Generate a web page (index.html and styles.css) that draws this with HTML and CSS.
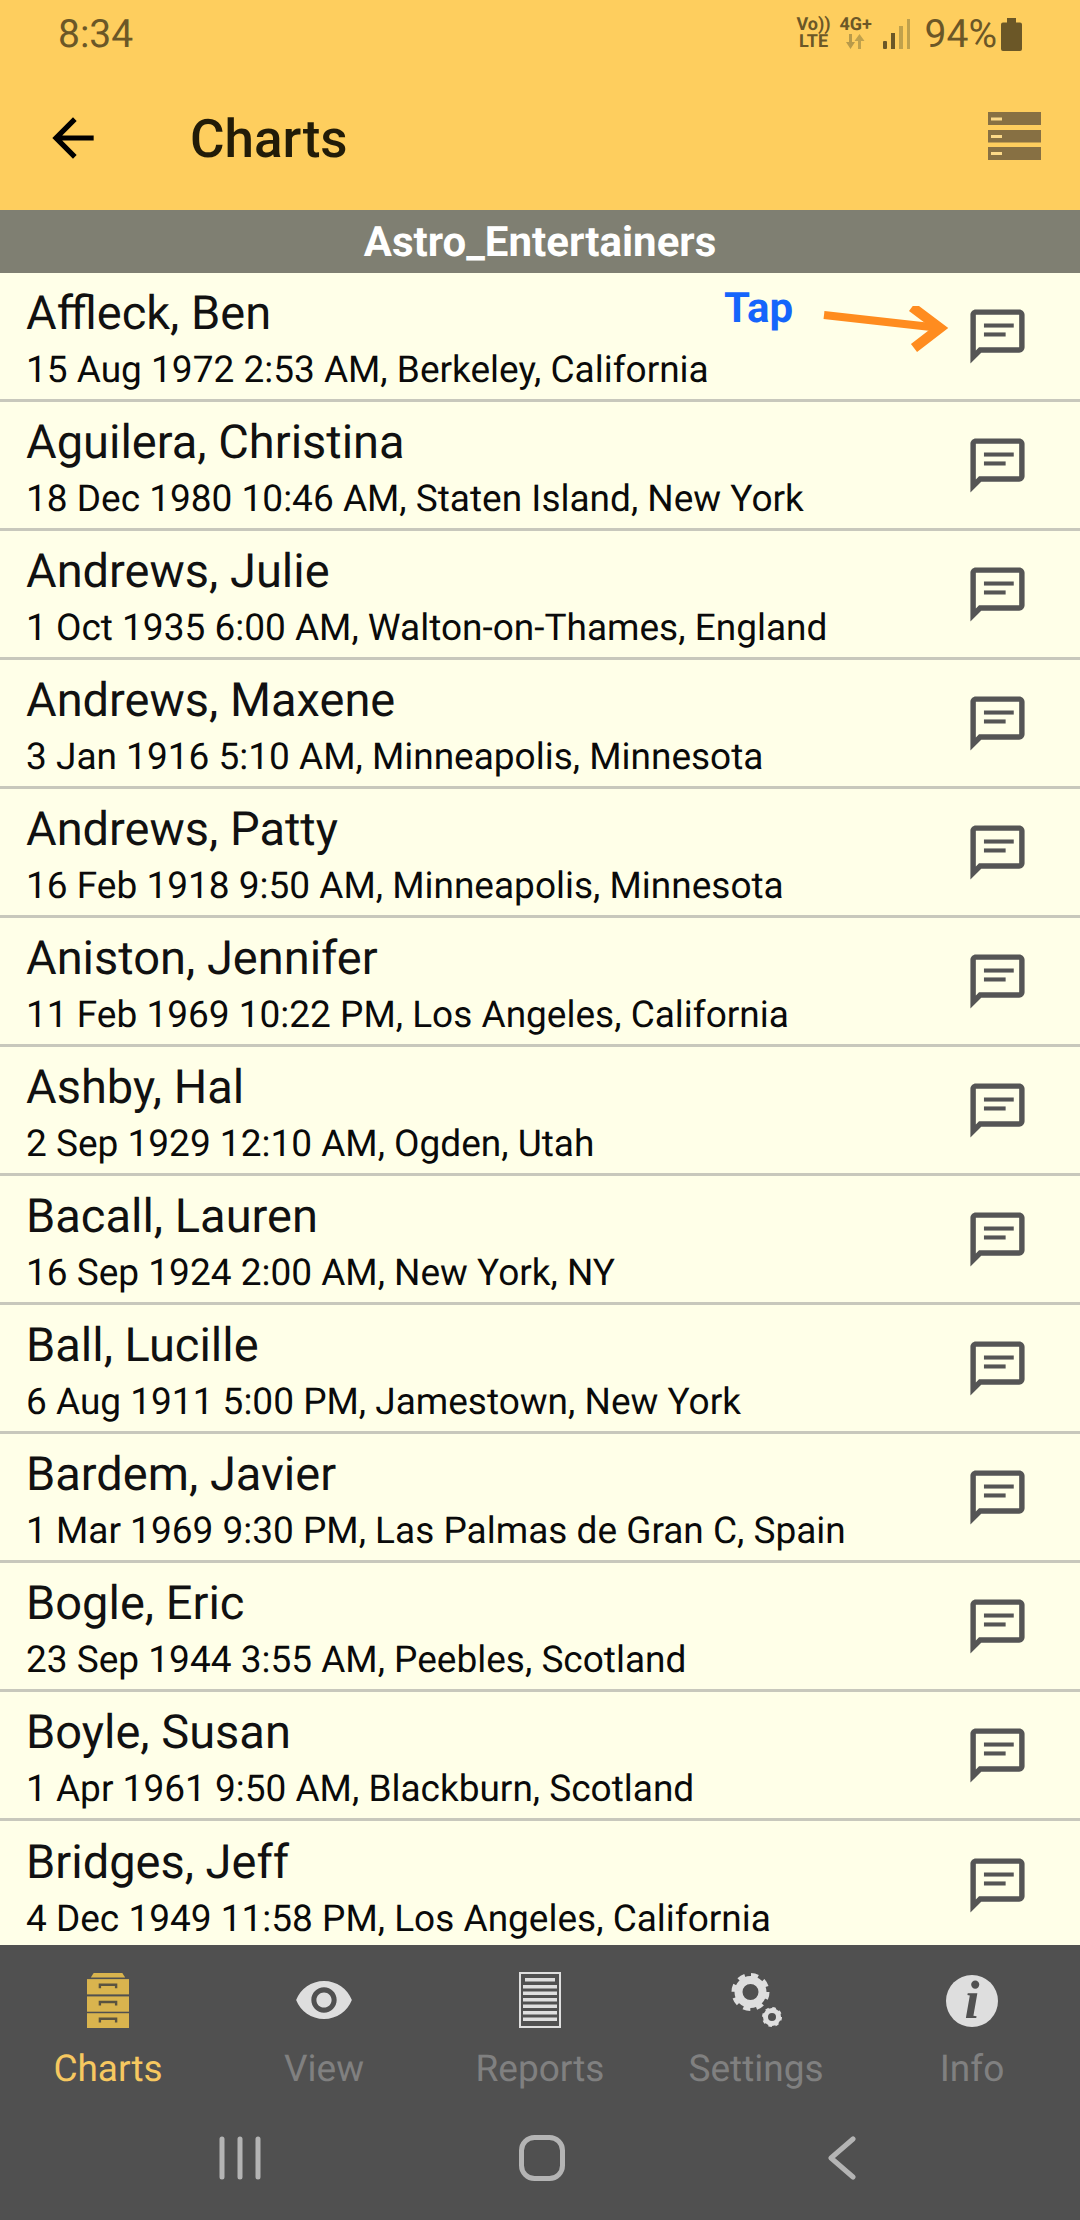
FILE: index.html
```html
<!DOCTYPE html>
<html lang="en">
<head>
<meta charset="utf-8">
<title>Charts</title>
<link rel="stylesheet" href="styles.css">
</head>
<body>
<svg class="defs" width="0" height="0" aria-hidden="true">
  <symbol id="msg" viewBox="0 0 24 24">
    <path d="M20 2H4c-1.1 0-2 .9-2 2v18l4-4h14c1.1 0 2-.9 2-2V4c0-1.1-.9-2-2-2zm0 14H5.17L4 17.17V4h16v12z"/>
    <rect x="7" y="7.2" width="11" height="1.5"/>
    <rect x="7" y="10.5" width="8" height="1.5"/>
  </symbol>
</svg>
<div class="page">
  <header class="appbar">
    <div class="status">
      <span class="clock">8:34</span>
      <div class="status-right">
        <div class="volte"><span>Vo))</span><span>LTE</span></div>
        <div class="net">
          <span>4G+</span>
          <svg width="24" height="15" viewBox="0 0 24 15"><path class="dim" d="M5 0h3v8h3l-4.5 7L2 8h3z"/><path class="dim2" d="M17 15h-3V7h-3.500l5-7 5 7H17z"/></svg>
        </div>
        <svg class="signal" width="28" height="30" viewBox="0 0 28 30">
          <rect class="on" x="0" y="22" width="4" height="8" rx="1"/>
          <rect class="on" x="8" y="14" width="4" height="16"/>
          <rect class="off" x="16" y="7" width="4" height="23"/>
          <rect class="off" x="24" y="0" width="3" height="30"/>
        </svg>
        <span class="pct">94%</span>
        <svg class="batt" width="21" height="33" viewBox="0 0 21 33"><path d="M6 0h9v4.500h4a2 2 0 0 1 2 2V31a2 2 0 0 1-2 2H2a2 2 0 0 1-2-2V6.500a2 2 0 0 1 2-2h4z"/></svg>
      </div>
    </div>
    <div class="toolbar">
      <svg class="back" width="62" height="62" viewBox="0 0 24 24"><path d="M20 11H7.830l5.590-5.590L12 4l-8 8 8 8 1.410-1.410L7.830 13H20v-2z"/></svg>
      <h1 class="title">Charts</h1>
      <svg class="menu" width="53" height="48" viewBox="0 0 53 48">
        <rect class="mbar" width="53" height="13"/><rect class="mnotch" x="3" y="5.500" width="11" height="3"/>
        <rect class="mbar" y="18" width="53" height="12.500"/><rect class="mnotch" x="3" y="23" width="11" height="3"/>
        <rect class="mbar" y="35" width="53" height="13"/><rect class="mnotch" x="3" y="40" width="11" height="3"/>
      </svg>
    </div>
  </header>
  <div class="band">Astro_Entertainers</div>
  <main class="list">
    <div class="row">
      <div class="text"><div class="name">Affleck, Ben</div><div class="sub">15 Aug 1972 2:53 AM, Berkeley, California</div></div>
      <svg class="msg"><use href="#msg"/></svg>
      <span class="tap">Tap</span>
      <svg class="arrow" width="126" height="48" viewBox="0 0 126 48"><path d="M1 9l116 13" class="shaft"/><path d="M89 1l28 21-26 20" class="ahead"/></svg>
    </div>
    <div class="row"><div class="text"><div class="name">Aguilera, Christina</div><div class="sub">18 Dec 1980 10:46 AM, Staten Island, New York</div></div><svg class="msg"><use href="#msg"/></svg></div>
    <div class="row"><div class="text"><div class="name">Andrews, Julie</div><div class="sub">1 Oct 1935 6:00 AM, Walton-on-Thames, England</div></div><svg class="msg"><use href="#msg"/></svg></div>
    <div class="row"><div class="text"><div class="name">Andrews, Maxene</div><div class="sub">3 Jan 1916 5:10 AM, Minneapolis, Minnesota</div></div><svg class="msg"><use href="#msg"/></svg></div>
    <div class="row"><div class="text"><div class="name">Andrews, Patty</div><div class="sub">16 Feb 1918 9:50 AM, Minneapolis, Minnesota</div></div><svg class="msg"><use href="#msg"/></svg></div>
    <div class="row"><div class="text"><div class="name">Aniston, Jennifer</div><div class="sub">11 Feb 1969 10:22 PM, Los Angeles, California</div></div><svg class="msg"><use href="#msg"/></svg></div>
    <div class="row"><div class="text"><div class="name">Ashby, Hal</div><div class="sub">2 Sep 1929 12:10 AM, Ogden, Utah</div></div><svg class="msg"><use href="#msg"/></svg></div>
    <div class="row"><div class="text"><div class="name">Bacall, Lauren</div><div class="sub">16 Sep 1924 2:00 AM, New York, NY</div></div><svg class="msg"><use href="#msg"/></svg></div>
    <div class="row"><div class="text"><div class="name">Ball, Lucille</div><div class="sub">6 Aug 1911 5:00 PM, Jamestown, New York</div></div><svg class="msg"><use href="#msg"/></svg></div>
    <div class="row"><div class="text"><div class="name">Bardem, Javier</div><div class="sub">1 Mar 1969 9:30 PM, Las Palmas de Gran C, Spain</div></div><svg class="msg"><use href="#msg"/></svg></div>
    <div class="row"><div class="text"><div class="name">Bogle, Eric</div><div class="sub">23 Sep 1944 3:55 AM, Peebles, Scotland</div></div><svg class="msg"><use href="#msg"/></svg></div>
    <div class="row"><div class="text"><div class="name">Boyle, Susan</div><div class="sub">1 Apr 1961 9:50 AM, Blackburn, Scotland</div></div><svg class="msg"><use href="#msg"/></svg></div>
    <div class="row"><div class="text"><div class="name">Bridges, Jeff</div><div class="sub">4 Dec 1949 11:58 PM, Los Angeles, California</div></div><svg class="msg"><use href="#msg"/></svg></div>
  </main>
  <footer class="bottom">
    <nav class="tabs">
      <div class="tab active">
        <div class="ico"><svg width="42" height="55" viewBox="0 0 44 54" preserveAspectRatio="none">
          <path class="cab" d="M4 4.500 7 0h30l3 4.500z"/>
          <rect class="cab" y="6" width="44" height="15"/><rect class="cab" y="23" width="44" height="15"/><rect class="cab" y="39.500" width="44" height="14.500"/>
          <path class="pull" d="M13.500 15v-3.500h17V15M13.500 32v-3.500h17V32M13.500 48.500V45h17v3.500"/>
        </svg></div>
        <span class="label">Charts</span>
      </div>
      <div class="tab">
        <div class="ico"><svg width="56" height="38" viewBox="1 4.500 22 15"><path class="light" d="M12 4.500C7 4.500 2.730 7.610 1 12c1.730 4.390 6 7.500 11 7.500s9.270-3.110 11-7.500c-1.730-4.390-6-7.500-11-7.500zM12 17c-2.760 0-5-2.240-5-5s2.240-5 5-5 5 2.240 5 5-2.240 5-5 5zm0-8c-1.660 0-3 1.340-3 3s1.340 3 3 3 3-1.340 3-3-1.340-3-3-3z"/></svg></div>
        <span class="label">View</span>
      </div>
      <div class="tab">
        <div class="ico"><svg width="42" height="56" viewBox="0 0 42 56">
          <rect class="page-o" x="1" y="1" width="40" height="54"/>
          <rect class="light" x="6" y="6" width="30" height="3.500"/>
          <rect class="light" x="4" y="13" width="34" height="3.500"/><rect class="light" x="4" y="19.500" width="34" height="3.500"/>
          <rect class="light" x="4" y="26" width="34" height="3.500"/><rect class="light" x="4" y="32.500" width="34" height="3.500"/>
          <rect class="light" x="4" y="39" width="34" height="3.500"/><rect class="light" x="4" y="45.500" width="34" height="3.500"/>
        </svg></div>
        <span class="label">Reports</span>
      </div>
      <div class="tab">
        <div class="ico"><svg class="gears" width="52" height="56" viewBox="0 0 52 56">
          <circle class="ring" cx="19.500" cy="20" r="12"/>
          <circle class="teeth" cx="19.500" cy="20" r="16.500"/>
          <circle class="ring2" cx="41" cy="45" r="6.500"/>
          <circle class="teeth2" cx="41" cy="45" r="8.500"/>
        </svg></div>
        <span class="label">Settings</span>
      </div>
      <div class="tab">
        <div class="ico"><svg class="info" width="54" height="70" viewBox="0 0 54 70">
          <circle class="light" cx="27" cy="35" r="26"/>
          <text class="itext" x="27" y="52" text-anchor="middle">i</text>
        </svg></div>
        <span class="label">Info</span>
      </div>
    </nav>
    <div class="sysnav">
      <svg width="42" height="44" viewBox="0 0 42 44"><path class="sys" d="M3 3v38M21 3v38M39 3v38"/></svg>
      <svg width="46" height="46" viewBox="0 0 46 46"><rect class="sys" x="2.500" y="2.500" width="41" height="41" rx="13"/></svg>
      <svg width="28" height="44" viewBox="0 0 28 44"><path class="sys" d="M25 3 3 22l22 19"/></svg>
    </div>
  </footer>
</div>
</body>
</html>
```
FILE: styles.css
```css
* { box-sizing: border-box; }
html, body { margin: 0; padding: 0; }
body { font-family: Roboto, "Liberation Sans", sans-serif; background: #ffffe8; text-rendering: geometricPrecision; }
.defs { position: absolute; }
.page { width: 1080px; height: 2220px; display: flex; flex-direction: column; overflow: hidden; }

.appbar { background: #fece5e; height: 210px; flex: none; }
.status { height: 66px; display: flex; justify-content: space-between; align-items: center; padding: 2px 58px 0 58px; color: #6b5727; }
.clock { font-size: 39px; line-height: 46px; }
.status-right { display: flex; align-items: center; }
.volte { display: flex; flex-direction: column; font-weight: 700; font-size: 18px; line-height: 17px; width: 34px; align-items: center; margin-top: -3px; }
.net { display: flex; flex-direction: column; align-items: center; margin: -3px 0 0 9px; font-weight: 700; font-size: 18px; line-height: 18px; width: 32px; }
.dim { fill: #b89a4a; }
.dim2 { fill: #c0a14c; }
.signal { margin-left: 11px; }
.signal .on { fill: #6b5727; }
.signal .off { fill: #c0a14c; }
.pct { font-size: 39px; line-height: 46px; margin-left: 14px; }
.batt { margin-left: 4px; fill: #6b5727; }

.toolbar { height: 144px; display: flex; align-items: center; padding-right: 39px; }
.back { margin-left: 42px; fill: #000; flex: none; }
.title { margin: 2px 0 0 86px; font-size: 53px; line-height: 60px; font-weight: 500; color: #221c08; flex: 1; }
.menu { flex: none; margin-top: -4px; }
.mbar { fill: #877043; }
.mnotch { fill: #fbd989; }

.band { height: 63px; flex: none; background: #7f7f72; color: #fff; font-weight: 700; font-size: 42px; line-height: 60px; padding-top: 3px; text-align: center; }

.list { flex: 1; min-height: 0; overflow: hidden; background: #ffffe8; }
.row { position: relative; height: 129px; border-bottom: 3px solid #c8c8bc; display: flex; align-items: center; justify-content: space-between; padding: 0 50px 0 26px; }
.row:last-child { border-bottom: 0; }
.text { display: flex; flex-direction: column; margin-top: 8px; }
.name { font-size: 47px; line-height: 58px; color: #111; }
.sub { font-size: 37px; line-height: 50px; color: #0a0a0a; margin-top: 3px; }
.msg { width: 65px; height: 65px; fill: #555; flex: none; }
.tap { position: absolute; left: 724px; top: 11px; font-size: 42px; line-height: 50px; font-weight: 700; color: #1565fb; }
.arrow { position: absolute; left: 823px; top: 33px; }
.shaft { fill: none; stroke: #ff8c1f; stroke-width: 8px; }
.ahead { fill: none; stroke: #ff8c1f; stroke-width: 10px; }

.bottom { height: 275px; flex: none; background: #505050; display: flex; flex-direction: column; }
.tabs { display: grid; grid-template-columns: repeat(5, 216px); padding-top: 27px; }
.tab { display: flex; flex-direction: column; align-items: center; }
.ico { height: 56px; display: flex; align-items: center; justify-content: center; }
.label { font-size: 37px; line-height: 44px; margin-top: 20px; color: #808080; }
.active .label { color: #f6c860; }
.cab { fill: #d9b44e; }
.pull { fill: none; stroke: #5a5340; stroke-width: 2.5px; }
.light { fill: #dedede; }
.page-o { fill: none; stroke: #dedede; stroke-width: 2px; }
.gears { margin-left: 2px; }
.info { flex: none; margin-top: 2px; }
.ring { fill: none; stroke: #dedede; stroke-width: 8px; }
.teeth { fill: none; stroke: #dedede; stroke-width: 5px; stroke-dasharray: 6.960 6; }
.ring2 { fill: none; stroke: #dedede; stroke-width: 5px; }
.teeth2 { fill: none; stroke: #dedede; stroke-width: 3px; stroke-dasharray: 3.340 3.340; }
.itext { font-family: "Liberation Serif", serif; font-style: italic; font-weight: 700; font-size: 54px; fill: #505050; }

.sysnav { flex: 1; display: grid; grid-template-columns: 480px 124px 476px; padding-top: 4px; }
.sysnav svg { justify-self: center; align-self: center; }
.sys { fill: none; stroke: #b4b4b4; stroke-width: 5px; stroke-linecap: round; stroke-linejoin: round; }
```
